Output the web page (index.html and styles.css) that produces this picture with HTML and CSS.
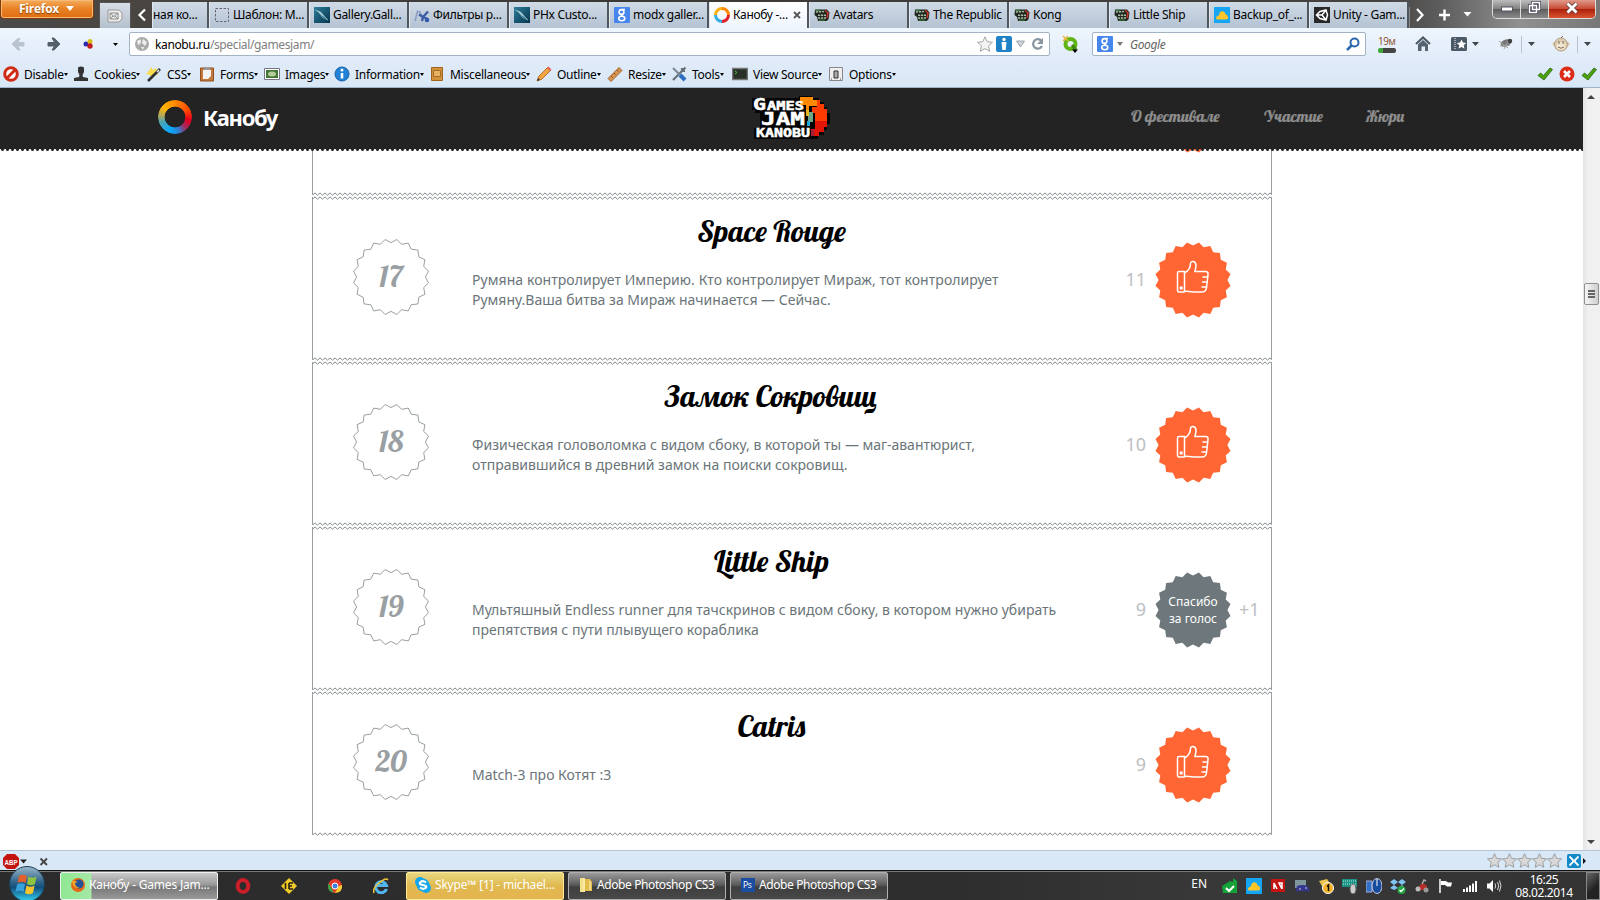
FILE: index.html
```html
<!DOCTYPE html>
<html lang="ru">
<head>
<meta charset="utf-8">
<title>Канобу - Games Jam</title>
<link rel="stylesheet" href="styles.css">
</head>
<body>
<svg class="defs" width="0" height="0">
  <defs>
    <pattern id="wave" width="5" height="4" patternUnits="userSpaceOnUse"><path d="M-.5 3.2 2 .9 4.5 3.2 7 .9" fill="none" stroke="#858c8e" stroke-width="1"/></pattern>
    <pattern id="teeth" width="5" height="3" patternUnits="userSpaceOnUse"><path d="M.7 0H4.3L3.3 2H1.700z" fill="#232323"/></pattern>
    <linearGradient id="orb" x2="0" y2="1"><stop offset="0" stop-color="#9db9cc"/><stop offset=".45" stop-color="#2e6288"/><stop offset=".6" stop-color="#12507e"/><stop offset="1" stop-color="#35d5f5"/></linearGradient>
    <linearGradient id="teal" x2="1" y2="1"><stop offset="0" stop-color="#2c7f9c"/><stop offset="1" stop-color="#06344d"/></linearGradient>
  </defs>
  <symbol id="burst" viewBox="-39 -39 78 78"><path d="M0-34.4 5.9-37.5 10.6-32.7 17.3-33.9 20.2-27.8 26.9-26.9 27.8-20.2 33.9-17.3 32.7-10.6 37.5-5.9 34.4 0 37.5 5.9 32.7 10.6 33.9 17.3 27.8 20.2 26.9 26.9 20.2 27.8 17.3 33.9 10.6 32.7 5.9 37.5 0 34.4-5.9 37.5-10.6 32.7-17.3 33.9-20.2 27.8-26.9 26.9-27.8 20.2-33.9 17.3-32.7 10.6-37.5 5.9-34.4 0-37.5-5.9-32.7-10.6-33.9-17.3-27.8-20.2-26.9-26.9-20.2-27.8-17.3-33.9-10.6-32.7-5.9-37.5z"/></symbol>
  <symbol id="thumb" viewBox="0 0 34 34"><g fill="none" stroke="#fff" stroke-width="1.5" stroke-linejoin="round" stroke-linecap="round"><path d="M1.5 13Q1.5 11.500 3 11.500H8.500V32H3Q1.500 32 1.500 30.500zM8.500 13C13 10.500 14.500 8 14.500 3.500 14.500.5 20 .5 20 5.500 20 8 19.500 9.500 18.800 11.500H30Q32.500 12 32 14.500L30.500 28Q30 31.500 26.500 32H18Q12 31.500 8.500 31"/><path d="M27 17h4.500M26.500 22h4.500M26 27h4"/><circle cx="5.200" cy="28" r="1"/></g></symbol>
  <symbol id="modx" viewBox="0 0 16 16"><path fill="url(#teal)" d="M0 0h16v16H0z"/><path d="M1 3 6 5 14 13M6 5l2 5M8 10l6 3" stroke="#6fa5b5" stroke-width="1" fill="none"/><path d="M2 3 7 5 12 11 7 8z" fill="#a8cad4"/></symbol>
  <symbol id="goog" viewBox="0 0 16 16"><rect width="16" height="16" rx="1" fill="#4787ed"/><g fill="none" stroke="#fff" stroke-width="1.600"><circle cx="7.500" cy="5" r="2.400"/><ellipse cx="7.800" cy="11.500" rx="3" ry="2.200"/><path d="M8 2.500h3M9 7Q6 8 9 9.500"/></g></symbol>
  <symbol id="ring" viewBox="0 0 16 16"><g fill="none" stroke-width="3"><path d="M8 1.500A6.500 6.500 0 0 1 14.500 8" stroke="#f80"/><path d="M14.500 8A6.500 6.500 0 0 1 8 14.500" stroke="#e12029"/><path d="M8 14.500A6.500 6.500 0 0 1 1.500 8" stroke="#37aee5"/><path d="M1.500 8A6.500 6.500 0 0 1 8 1.500" stroke="#fbb016"/></g></symbol>
  <symbol id="jam" viewBox="0 0 16 16"><path d="M1 2.500h12l2.500 3-1 7-2 1.500H4L3 10 .5 8z" fill="#20271f"/><path d="M2 5l8-.5M4 8.200h8M4 11h8" stroke="#a9bba6" stroke-width="1.500" stroke-dasharray="2.200 .8"/><path d="M11 3.500l3 2.500-1 5" stroke="#c8362e" stroke-width="1.500" fill="none"/><path d="M1.500 3.500l5-.5M5 13h6" stroke="#3f8a47"/></symbol>
  <symbol id="cloud" viewBox="0 0 16 16"><path fill="#16a5f3" d="M0 0h16v16H0z"/><path d="M2 11.500c0-2 1.500-3 3-3C5 3 11 3 11.500 7.500c2 0 3 2 2.500 4q-1 1-2 1H4q-2 0-2-1" fill="#ffc629"/></symbol>
  <symbol id="star" viewBox="0 0 16 16"><path d="M8 .8 10.200 5.700 15.500 6.300 11.500 10 12.700 15.300 8 12.600 3.300 15.300 4.500 10 .5 6.300 5.800 5.700z"/></symbol>
  <symbol id="check" viewBox="0 0 16 16"><path d="M1 9.500 3.500 7 6.500 9.500 13 2 15.500 3.500 7 14z" fill="#4ca10c" stroke="#28670a" stroke-width=".8"/></symbol>
</svg>

<header class="tabstrip">
  <div class="fx">Firefox<i class="dn"></i></div>
  <div class="apptab"><svg width="16" height="16" viewBox="0 0 16 16"><path d="M1 2h11l3 3v6l-3 3H1z" fill="#ededed" stroke="#999"/><path d="M3 5h8v6H3zl4 3.500L11 5M3 11l3-3M11 11 8 8" fill="none" stroke="#8a8a8a"/></svg></div>
  <div class="scr"><svg width="10" height="14" viewBox="0 0 10 14"><path d="M8 1.500 2.500 7 8 12.500" fill="none" stroke="#fff" stroke-width="2.200"/></svg></div>
  <div class="tab cut"><span>ная ко...</span></div>
  <div class="tab"><svg class="ic"><rect x="1.500" y="1.500" width="13" height="13" fill="none" stroke="#667" stroke-dasharray="2.500 1.500"/></svg><span>Шаблон: М...</span></div>
  <div class="tab"><svg class="ic"><use href="#modx"/></svg><span>Gallery.Gall...</span></div>
  <div class="tab"><svg class="ic" viewBox="0 0 16 16"><path d="M1 14 3.500 4.500 6 5 9 12" fill="none" stroke="#8b9cc4" stroke-width="1.600"/><path d="M5 7.500 9 10 14 4.500M9 10l-1 4M9 10l4 1.500" fill="none" stroke="#3c5ca5" stroke-width="2.400"/><circle cx="13" cy="13" r="2.300" fill="#3358ac"/></svg><span>Фильтры р...</span></div>
  <div class="tab"><svg class="ic"><use href="#modx"/></svg><span>PHx Custo...</span></div>
  <div class="tab"><svg class="ic"><use href="#goog"/></svg><span>modx galler...</span></div>
  <div class="tab on"><svg class="ic"><use href="#ring"/></svg><span>Канобу -...</span><svg class="x" width="8" height="8"><path d="M1 1 7 7M7 1 1 7" stroke="#555" stroke-width="1.800"/></svg></div>
  <div class="tab"><svg class="ic"><use href="#jam"/></svg><span>Avatars</span></div>
  <div class="tab"><svg class="ic"><use href="#jam"/></svg><span>The Republic</span></div>
  <div class="tab"><svg class="ic"><use href="#jam"/></svg><span>Kong</span></div>
  <div class="tab"><svg class="ic"><use href="#jam"/></svg><span>Little Ship</span></div>
  <div class="tab"><svg class="ic"><use href="#cloud"/></svg><span>Backup_of_...</span></div>
  <div class="tab"><svg class="ic" viewBox="0 0 16 16"><path fill="#292929" d="M0 0h16v16H0z"/><path d="M2.500 8 6 4.500 12 3l1.500 5L12 13 6 11.500zM2.500 8H8l4-5M8 8l4 5" fill="none" stroke="#fff" stroke-width="1.500"/></svg><span>Unity - Gam...</span></div>
  <div class="tabend">
    <svg width="70" height="16" viewBox="0 0 70 16"><path d="M4 2 9.500 8 4 14" fill="none" stroke="#fff" stroke-width="2.200"/><path d="M26 8H37M31.500 2.500v11" stroke="#fff" stroke-width="2.400"/><path d="M50.500 5h8l-4 4.500z" fill="#fff"/></svg>
  </div>
  <div class="winbtns">
    <div><svg width="14" height="12"><rect x="1.500" y="5" width="11" height="4" fill="#fff" stroke="#556"/></svg></div>
    <div><svg width="14" height="14"><path d="M4.500 1.500h7v7h-7zM1.500 4.500h7v7h-7z" fill="none" stroke="#445" stroke-width="3"/><path d="M4.500 1.500h7v7h-7zM1.500 4.500h7v7h-7z" fill="none" stroke="#fff" stroke-width="1.500"/></svg></div>
    <div class="cls"><svg width="14" height="12"><path d="M2.500 1.500 11.500 10.500M11.500 1.500 2.500 10.500" stroke="#644" stroke-width="4.500"/><path d="M2.500 1.500 11.500 10.500M11.500 1.500 2.500 10.500" stroke="#fff" stroke-width="2.800"/></svg></div>
  </div>
</header>

<div class="navbar">
  <div class="navleft">
    <svg width="129" height="30" viewBox="0 0 129 30"><path d="M12 15 18 9.500h2l-2.500 4H24v3.500h-6.500l2.500 4h-2z" fill="#b9c3cd" stroke="#b9c3cd"/><path d="M60 15 54 9h-2l2.500 4.500H48V17h6.500L52 21h2z" fill="#53606c" stroke="#53606c"/><circle cx="86" cy="15" r="2.500" fill="#2929b8"/><circle cx="90" cy="12.500" r="2.500" fill="#d9bd17"/><circle cx="90" cy="17" r="2.700" fill="#c31c20"/><path d="M113 14h5l-2.500 3z"/></svg>
  </div>
  <div class="url">
    <svg width="16" height="16" viewBox="0 0 16 16"><circle cx="8" cy="8" r="7" fill="#aaa"/><path d="M3 5q4-3 4 0t-3 4zM9 3l4 3-2 4-3-3zM7 11l3 0-1 3z" fill="#eee"/></svg>
    <span class="addr"><b>kanobu.ru</b>/special/gamesjam/</span>
    <svg width="70" height="18" viewBox="0 0 70 18"><use href="#star" width="16" height="16" x="1" y="1" fill="#f4f4f4" stroke="#a5a5a5"/><rect x="20" y="1" width="16" height="16" rx="2" fill="#1f82c4"/><circle cx="28" cy="4.500" r="1.700" fill="#fff"/><path d="M25.500 7h5l-.8 8h-3.400z" fill="#fff"/><path d="M40.500 6h8l-4 6z" fill="#ccd3da" stroke="#a0a7b0"/><path d="M65.500 6A4.700 4.700 0 1 0 66 11" fill="none" stroke="#8895a1" stroke-width="2.200"/><path d="M67 3v6h-6z" fill="#8895a1"/></svg>
  </div>
  <svg class="qico" width="18" height="20" viewBox="0 0 18 20"><circle cx="9.500" cy="10" r="5" fill="none" stroke="#62b516" stroke-width="4"/><path d="M11 11l4 5" stroke="#3d8a0c" stroke-width="3"/><path d="M2 2 7 7M2 7 7 2" stroke="#e9b43b" stroke-width="1.500"/><path d="M11 15.500h6L14 19z"/></svg>
  <div class="search"><svg class="ic"><use href="#goog"/></svg><i class="dn g"></i><em>Google</em>
    <svg width="14" height="14"><circle cx="8.500" cy="5.500" r="4" fill="none" stroke="#2b68ad" stroke-width="2"/><path d="M5.500 8.500 1 13" stroke="#2b68ad" stroke-width="2.500"/></svg></div>
  <div class="mem"><span>19м</span><i></i></div>
  <svg class="navicons" width="186" height="30" viewBox="0 0 186 30"><path d="M4 15 11 8.500 18 15" fill="none" stroke="#4c5966" stroke-width="2.200"/><path d="M6 15.500 11 11l5 4.500V22h-3v-4.500H9.500V22H6z" fill="#55626f"/><rect x="39" y="8" width="16" height="14" rx="1.500" fill="#4c5966"/><path d="M43 9v12" stroke="#fff" stroke-dasharray="1 1"/><use href="#star" x="44.500" y="10" width="10" height="10" fill="#fff"/><path d="M60 13h7l-3.500 4z" fill="#3c444c"/><ellipse cx="94" cy="14" rx="5.500" ry="3.500" fill="#777" transform="rotate(-20 94 14)"/><path d="M87 12 96 19M92 20l4-8M88 17l10-1" stroke="#a0a0a0"/><circle cx="98" cy="12" r="2.200" fill="#404040"/><path d="M109.500 7v17M165.500 7v17" stroke="#b5c3d3"/><path d="M116 13h7l-3.500 4zM172 13h7l-3.500 4z" fill="#3c444c"/><circle cx="142.500" cy="15" r="2" fill="#dbc4aa"/><circle cx="155.500" cy="15" r="2" fill="#dbc4aa"/><circle cx="149" cy="15.500" r="6.500" fill="#ddcbae" stroke="#b39e83"/><ellipse cx="149" cy="17" rx="4.500" ry="4" fill="#f1e6d0"/><path d="M147 12v3M151 12v3M146 18q3 2.500 6 0M149 9l2-2" stroke="#796857" fill="none"/></svg>
</div>

<div class="devbar">
  <div class="d d1"><svg class="ic"><circle cx="8" cy="8" r="6.300" fill="#fff" stroke="#cf2b17" stroke-width="3"/><path d="M4 12 12 4" stroke="#cf2b17" stroke-width="3"/></svg><span>Disable</span></div>
  <div class="d d2"><svg class="ic"><path d="M5 1.500Q8-.5 11 1.500V6L9.500 9l.5 2 5 1v3H1v-3l5-1 .5-2L5 6z" fill="#343434"/></svg><span>Cookies</span></div>
  <div class="d d3"><svg class="ic"><path d="M5 1l2 3 4-2-1 4 2 3-4 0-2 4-2-4-4-1 3-3z" fill="#f8dc4d"/><path d="M2 15 14 3" stroke="#303030" stroke-width="2.600"/><path d="M11 6l2-2" stroke="#eee" stroke-width="1.500"/></svg><span>CSS</span></div>
  <div class="d d4"><svg class="ic"><path d="M1.500 2h13v13h-13z" fill="#c37a3c" stroke="#93501f"/><path d="M4 4h8v6l-3 3H4z" fill="#f4f4f4"/><path d="M5 1h6v3H5z" fill="#999"/></svg><span>Forms</span></div>
  <div class="d d5"><svg class="ic"><path d="M.5 2.500h15v11H.5z" fill="#fff" stroke="#778"/><path d="M2 4h12v8H2z" fill="#447836"/><ellipse cx="8" cy="8" rx="4" ry="2.500" fill="#b6cc9a"/></svg><span>Images</span></div>
  <div class="d d6"><svg class="ic"><circle cx="8" cy="8" r="7" fill="#2382d6" stroke="#1560a5"/><path d="M8 7v5.500" stroke="#fff" stroke-width="2.500"/><circle cx="8" cy="4" r="1.500" fill="#fff"/></svg><span>Information</span></div>
  <div class="d d7"><svg class="ic"><path d="M2.500 1.500h11v13h-11z" fill="#d3913c" stroke="#a0641c"/><path d="M4.500 4.500h7v6h-7z" fill="#e7b263" stroke="#a56c26"/></svg><span>Miscellaneous</span></div>
  <div class="d d8"><svg class="ic"><path d="M1 15 3 10 12 1 15 4 6 13z" fill="#f3a546" stroke="#b97327"/><path d="M11 2 14 5 15.500 3.500 12.500.5z" fill="#e1625e"/><path d="M1 15l1-3 2 2z" fill="#333"/></svg><span>Outline</span></div>
  <div class="d d9"><svg class="ic"><path d="M1 12.500 12 1.500 15 4.500 4 15.500z" fill="#d59352" stroke="#a5662d"/><path d="M4 10l1.500 1.500M7 7l1.500 1.500M10 4l1.500 1.500" stroke="#895122"/></svg><span>Resize</span></div>
  <div class="d d10"><svg class="ic"><path d="M2 14 12 4M12 4l2.500-2.500M11 2v3l3 0" stroke="#67717a" stroke-width="2.200" fill="none"/><path d="M2 2l7 7" stroke="#7d8790" stroke-width="2"/><path d="M9 9l5 5" stroke="#2d6cc2" stroke-width="4"/></svg><span>Tools</span></div>
  <div class="d d11"><svg class="ic"><rect x=".5" y="2.500" width="15" height="11" fill="#283028" stroke="#777" stroke-width="1.500"/><path d="M3 5l2 1.500L3 8" stroke="#5cc04e" fill="none"/></svg><span>View Source</span></div>
  <div class="d d12"><svg class="ic"><path d="M1.500 1.500h13v13h-13z" fill="#eee" stroke="#888"/><path d="M6 12V5h4v7z" fill="#aaa" stroke="#333"/><path d="M3 13h1M12 13h1" stroke="#444"/></svg><span>Options</span></div>
  <div class="dright"><svg class="ic"><use href="#check"/></svg><svg class="ic"><circle cx="8" cy="8" r="7.500" fill="#dc2b16"/><path d="M5 5 11 11M11 5 5 11" stroke="#fff" stroke-width="2.700"/></svg><svg class="ic"><use href="#check"/></svg></div>
</div>

<div class="view">
  <main class="page">
    <div class="cards">
      <section class="card">
        <svg class="w"><rect width="100%" height="4" fill="url(#wave)"/></svg>
        <div class="row"><div class="num"></div><div class="txt"></div><div class="cnt"></div><div class="vote"><svg class="b"><use href="#burst"/></svg></div></div>
        <svg class="w bot"><rect width="100%" height="4" fill="url(#wave)"/></svg>
      </section>
      <section class="card">
        <svg class="w"><rect width="100%" height="4" fill="url(#wave)"/></svg>
        <div class="row"><div class="num"><svg class="b"><use href="#burst"/></svg><span>17</span></div>
          <div class="txt"><h2>Space Rouge</h2><p><span class="wide">Румяна контролирует Империю. Кто контролирует Мираж, тот контролирует</span><br>Румяну.Ваша битва за Мираж начинается — Сейчас.</p></div>
          <div class="cnt">11</div><div class="vote"><svg class="b"><use href="#burst"/></svg><svg class="th"><use href="#thumb"/></svg></div></div>
        <svg class="w bot"><rect width="100%" height="4" fill="url(#wave)"/></svg>
      </section>
      <section class="card">
        <svg class="w"><rect width="100%" height="4" fill="url(#wave)"/></svg>
        <div class="row"><div class="num"><svg class="b"><use href="#burst"/></svg><span>18</span></div>
          <div class="txt"><h2>Замок Сокровищ</h2><p>Физическая головоломка с видом сбоку, в которой ты — маг-авантюрист,<br>отправившийся в древний замок на поиски сокровищ.</p></div>
          <div class="cnt">10</div><div class="vote"><svg class="b"><use href="#burst"/></svg><svg class="th"><use href="#thumb"/></svg></div></div>
        <svg class="w bot"><rect width="100%" height="4" fill="url(#wave)"/></svg>
      </section>
      <section class="card">
        <svg class="w"><rect width="100%" height="4" fill="url(#wave)"/></svg>
        <div class="row"><div class="num"><svg class="b"><use href="#burst"/></svg><span>19</span></div>
          <div class="txt"><h2>Little Ship</h2><p>Мультяшный Endless runner для тачскринов с видом сбоку, в котором нужно убирать<br>препятствия с пути плывущего кораблика</p></div>
          <div class="cnt">9</div><div class="vote done"><svg class="b"><use href="#burst"/></svg><span>Спасибо<br>за голос</span></div><div class="plus">+1</div></div>
        <svg class="w bot"><rect width="100%" height="4" fill="url(#wave)"/></svg>
      </section>
      <section class="card last">
        <svg class="w"><rect width="100%" height="4" fill="url(#wave)"/></svg>
        <div class="row"><div class="num"><svg class="b"><use href="#burst"/></svg><span>20</span></div>
          <div class="txt"><h2>Catris</h2><p>Match-3 про Котят :3</p></div>
          <div class="cnt">9</div><div class="vote"><svg class="b"><use href="#burst"/></svg><svg class="th"><use href="#thumb"/></svg></div></div>
        <svg class="w bot"><rect width="100%" height="4" fill="url(#wave)"/></svg>
      </section>
    </div>
    <div class="sitehead">
      <div class="bar">
        <div class="brand"><i class="logo"></i><span>Канобу</span></div>
        <svg class="gj" width="80" height="46" viewBox="0 0 80 46">
          <path d="M47 1H60V3H67V7H72V12H75V18H78V29H75V35H72V40H66V44H2V33H8V18H3V15H0V3H47z" fill="#050505"/>
          <path d="M48 2h13v3h4v6h-8v4h-3v-5H48z" fill="#ff8a00"/>
          <path d="M65 5h3v4h4v5h3v12H63v-8h-3v-6h5z" fill="#ff3c00"/>
          <path d="M63 26h12v6h-3v5h-5v4h-8v-7h4z" fill="#e01507"/>
          <path d="M54 15h3v6h-3z" fill="#e5b420"/><path d="M57 17h4v10h-3v4h-2V21h1z" fill="#6fa789"/><path d="M55 26h3v5h-3z" fill="#1fa9e1"/><path d="M59 35h3v6h-3z" fill="#a31f38"/>
          <g fill="#fff" stroke="#fff" stroke-width=".5" font-family="DejaVu Sans Mono,monospace" font-weight="700">
            <text x="1" y="14.500" font-size="16" textLength="13" lengthAdjust="spacingAndGlyphs">G</text><text x="15" y="14.500" font-size="12.500" textLength="37" lengthAdjust="spacingAndGlyphs">AMES</text>
            <text x="9" y="29.500" font-size="18" textLength="44" lengthAdjust="spacingAndGlyphs">JAM</text>
            <text x="4" y="42" font-size="12" textLength="54" lengthAdjust="spacingAndGlyphs">KANOBU</text>
          </g>
        </svg>
        <nav class="menu"><a class="m1">О фестивале</a><a class="m2">Участие</a><a class="m3">Жюри</a></nav>
      </div>
      <svg class="teeth"><rect width="100%" height="3" fill="url(#teeth)"/></svg>
    </div>
  </main>
  <aside class="sb">
    <svg width="16" height="18"><path d="M4 11h8L8 7z" fill="#444"/></svg>
    <div class="knob"><i></i><i></i><i></i></div>
    <svg class="down" width="16" height="18"><path d="M4 8h8l-4 4z" fill="#444"/></svg>
  </aside>
</div>

<div class="addon">
  <svg width="60" height="18" viewBox="0 0 60 18"><path d="M7 2h8l4 4v7l-4 4H7l-4-4V6z" fill="#c41410"/><text x="4.500" y="13" font-size="8" font-weight="700" fill="#fff" font-family="Liberation Sans,sans-serif" textLength="13" lengthAdjust="spacingAndGlyphs">ABP</text><path d="M20 7.500h7l-3.500 4z" fill="#222"/><path d="M40.500 6.500 47 13M47 6.500 40.500 13" stroke="#444" stroke-width="1.800"/></svg>
  <svg width="106" height="18" viewBox="0 0 106 18"><g fill="#d8d8d8" stroke="#9b9b9b" stroke-width="1"><use href="#star" x="0" y="1" width="15" height="15"/><use href="#star" x="15" y="1" width="15" height="15"/><use href="#star" x="30" y="1" width="15" height="15"/><use href="#star" x="45" y="1" width="15" height="15"/><use href="#star" x="60" y="1" width="15" height="15"/></g><rect x="80" y="2" width="14" height="14" rx="2" fill="#128ac8"/><path d="M82.500 4.500 86 8v2l-3.500 3.500M91.500 4.500 88 8v2l3.500 3.500M86 9h2" fill="none" stroke="#fff" stroke-width="1.800"/><path d="M96 6l3 3-3 3z" fill="#111"/></svg>
</div>

<footer class="task">
  <svg class="start" width="40" height="36" viewBox="0 0 40 36"><circle cx="20" cy="19" r="17.500" fill="url(#orb)" stroke="#1c4058"/><path d="M12 11q4-2.500 8 0l-1.500 7q-4-2.500-8 0z" fill="#e2602c"/><path d="M21.500 11.500q4 2.500 8 0L28 19q-4 2.500-8 0z" fill="#8fc440"/><path d="M10 19.500q4-2.500 8 0L16.500 27q-4-2.500-8 0z" fill="#38a2dd"/><path d="M19.500 20.500q4 2.500 8 0L26 28q-4 2.500-8 0z" fill="#f6c52c"/></svg>
  <div class="tb ff"><svg class="ic"><circle cx="8" cy="8" r="7" fill="#e66a16"/><circle cx="9" cy="7" r="4.500" fill="#23529a"/><path d="M2 4q1 8 8 7-5-1-5-5l3-1-4-1z" fill="#f7a928"/></svg><span>Канобу - Games Jam...</span></div>
  <div class="pins">
    <svg class="ic"><ellipse cx="8" cy="8" rx="5.300" ry="6" fill="none" stroke="#cc1e29" stroke-width="4"/></svg>
    <svg class="ic"><path d="M8 0 16 8 8 16 0 8z" fill="#f3cb26"/><path d="M4.500 5v6M8 5h4M8 8h3M8 11h4M8 5v6" stroke="#25201a" stroke-width="1.600"/></svg>
    <svg class="ic"><circle cx="8" cy="8" r="7" fill="#e53b2e"/><path d="M1.500 5 7 14.500Q1 14 1 8z" fill="#37a54a"/><path d="M8 15 12 8l3-1q1 7-7 8" fill="#f9cf2e"/><circle cx="8" cy="8" r="3" fill="#3d7fe0" stroke="#fff"/></svg>
    <svg class="ic"><path d="M13.500 11A5.500 5.500 0 1 1 13.500 7.500H4" fill="none" stroke="#52b7f0" stroke-width="3"/><path d="M1 15Q-1 11 6 5T15 2" fill="none" stroke="#efc43b" stroke-width="1.600"/></svg>
  </div>
  <div class="tb sk"><svg class="ic"><circle cx="5" cy="5" r="5" fill="#16a6ea"/><circle cx="11" cy="11" r="5" fill="#16a6ea"/><circle cx="8" cy="8" r="6.500" fill="#16a6ea"/><path d="M11 5.500Q8 3 5.500 5T8 8t2.500 3T5 10.500" fill="none" stroke="#fff" stroke-width="2"/></svg><span>Skype™ [1] - michael...</span></div>
  <div class="tb a1"><svg class="ic"><path d="M2 1h5v14H2z" fill="#f4e08a"/><path d="M7 2h5l2 3v9H7z" fill="#e3bd4c"/><path d="M6 1v14M12 4v9" stroke="#fff4c0"/></svg><span>Adobe Photoshop CS3</span></div>
  <div class="tb a2"><svg class="ic"><path d="M1 1h14v14H1z" fill="#1b4da0"/><text x="3" y="10.500" font-size="8.500" fill="#fff" font-family="Open Sans,sans-serif">Ps</text></svg><span>Adobe Photoshop CS3</span></div>
  <div class="tray">
    <span class="en">EN</span>
    <div class="ti">
      <svg class="ic"><path d="M0 8 8 3l3 1V0l4 3v12H1z" fill="#15a339"/><path d="M4 10l3 3 5-5" fill="none" stroke="#fff" stroke-width="2"/></svg>
      <svg class="ic"><use href="#cloud"/></svg>
      <svg class="ic"><path d="M1 1h14v13H1z" fill="#c41313"/><path d="M4 11V5l3 6M12 11V5l-3 0 3 6" fill="none" stroke="#fff" stroke-width="1.500"/></svg>
      <svg class="ic"><path d="M1 2h11v8H1z" fill="#7f979d"/><path d="M3 8q5-2 11 0l2 6-4-1H5l-3 1z" fill="#34368f"/><path d="M6 10v2M11 10h2" stroke="#ccc"/></svg>
      <svg class="ic"><path d="M1 3l8-2 4 6-6 6z" fill="#ecc44f"/><circle cx="10" cy="10" r="5.500" fill="#f4b229" stroke="#fff"/><path d="M9 8.500 10.500 7v6" fill="none" stroke="#111" stroke-width="1.500"/></svg>
      <svg class="ic"><path d="M0 1h15v8H0z" fill="#1b9185"/><path d="M1 3h13M1 6h13" stroke="#b8f0e5" stroke-dasharray="1 1"/><ellipse cx="11" cy="11" rx="3" ry="5" fill="#ccc" stroke="#666"/></svg>
      <svg class="ic"><path d="M0 3h6v11H0z" fill="#3171c4" stroke="#aad"/><ellipse cx="11" cy="8" rx="5" ry="7.500" fill="#164c9e" stroke="#ccd"/><path d="M11 1v7" stroke="#fff"/></svg>
      <svg class="ic"><path d="M4 1 8 4 4 7 0 4zM12 1l4 3-4 3-4-3zM4 7l4 3-4 2-4-2zM12 7l3 3-3 2-4-2z" fill="#82c4f0"/><circle cx="11.500" cy="12" r="4" fill="#22a442"/><path d="M9.500 12l1.500 1.500L14 10.500" fill="none" stroke="#fff" stroke-width="1.300"/></svg>
      <svg class="ic"><path d="M5 8 9 5l4 3-1 4H6z" fill="#b62f29"/><circle cx="4" cy="11" r="2.500" fill="#bbb"/><circle cx="12" cy="12" r="2.500" fill="#999"/><path d="M8 6l2-4 2 1" stroke="#aaa" fill="none" stroke-width="1.500"/></svg>
      <svg class="ic"><path d="M2 1v14" stroke="#fff" stroke-width="1.500"/><path d="M3 3h5l2 1.500h4l-1 4H9L7 7H3z" fill="#fff"/></svg>
      <svg class="ic"><path d="M2 11v3M5 9.500V14M8 7.500V14M11 5.500V14M14 3v11" stroke="#fff" stroke-width="2"/></svg>
      <svg class="ic"><path d="M1 5.500h2.500L7 2v12L3.500 10.500H1z" fill="#fff"/><path d="M9 5.500q1.500 2.500 0 5M11.500 4q2.500 4 0 8M13.500 2.500q3 5 0 11" fill="none" stroke="#ddd"/></svg>
    </div>
    <div class="clock">16:25<br>08.02.2014</div>
    <i class="peek"></i>
  </div>
</footer>
</body>
</html>
```
FILE: styles.css
```css
* { box-sizing: border-box; }
body { margin: 0; width: 1600px; height: 900px; overflow: hidden; background: #fff; font: 12px "Noto Sans", "Open Sans", sans-serif; color: #000; display: flex; flex-direction: column; }
svg { display: block; flex: none; }
.defs { position: absolute; }
.ic { width: 16px; height: 16px; }
span { white-space: nowrap; }
.dn { border: 4px solid transparent; border-top: 5px solid #fff; border-bottom: 0; }

.tabstrip { height: 28px; flex: none; display: flex; align-items: flex-end; background: linear-gradient(90deg, #4a4a4a 0, #4a4642 100px, #3a3835 600px, #454240 1380px, #5d5d5d 1440px, #909090 1520px, #777 1600px); }
.tabstrip > * { flex: none; }
.fx { width: 94px; height: 19px; align-self: flex-start; margin-right: 5px; background: linear-gradient(#f4ad5a, #e88024 50%, #dd6d10); border: 1px solid #7e3c0a; border-top: 0; border-radius: 0 0 4px 4px; box-shadow: inset 0 0 0 1px #f6b978; color: #fff; font: 700 12px/17px "Open Sans", sans-serif; letter-spacing: -.25px; display: flex; align-items: center; gap: 7px; padding: 0 0 2px 18px; text-shadow: 0 1px 1px #864000; }
.apptab { width: 32px; height: 26px; background: linear-gradient(#d6dde6, #b4c0ce); border: 1px solid #555; border-bottom: 0; display: grid; place-items: center; }
.scr { width: 21px; height: 26px; display: grid; place-items: center; }
.tab { width: 100px; height: 26px; border: 1px solid #50565d; border-left-color: #e2e8ee; border-width: 0 2px 0 1px; background: linear-gradient(#d0dbe7, #b4c2d2); display: flex; align-items: center; gap: 3px; padding: 0 0 1px 4px; overflow: hidden; letter-spacing: -.3px; }
.tab.cut { width: 57px; padding-left: 0; }
.tab.on { background: linear-gradient(#fff, #eef5fd); }
.tab .x { margin-left: auto; margin-right: 6px; }
.tabend { width: 75px; padding: 0 0 5px 3px; border-left: 1px solid #888; }
.winbtns { align-self: flex-start; display: flex; height: 19px; width: 104px; margin-left: 8px; border: 1px solid #ddd; border-top: 0; border-radius: 0 0 5px 5px; overflow: hidden; }
.winbtns div { width: 28px; padding-bottom: 2px; background: linear-gradient(#bdbdbd, #828282 48%, #5c5c5c 50%, #8a8a8a); border-right: 1px solid #ddd; display: grid; place-items: center; }
.winbtns .cls { width: 46px; background: linear-gradient(#e09a8c, #c84b34 48%, #ab1f0a 50%, #d9542f); border: 0; }

.navbar { height: 33px; flex: none; background: linear-gradient(#eef5fd, #e0ebf8); display: flex; align-items: center; padding-bottom: 1px; }
.navleft { width: 129px; }
.url { width: 921px; height: 24px; background: #fff; border: 1px solid #a3b3c6; border-radius: 2px; display: flex; align-items: center; padding: 0 3px 0 4px; gap: 5px; }
.addr { flex: 1; color: #808080; letter-spacing: -.37px; }
.addr b { font-weight: 400; color: #000; }
.qico { margin: 0 13px 0 11px; }
.search { width: 274px; height: 24px; background: #fff; border: 1px solid #a3b3c6; border-radius: 2px; display: flex; align-items: center; padding: 0 5px 0 4px; }
.search .dn { border-width: 3px; border-top: 4px solid #777; border-bottom: 0; margin: 0 7px 0 4px; }
.search em { flex: 1; color: #666; letter-spacing: -.4px; }
.mem { width: 19px; margin-left: 12px; color: #8a4a1f; font: 10px/13px "Open Sans", sans-serif; letter-spacing: -.5px; }
.mem i { display: block; height: 5px; width: 18px; border-radius: 2px; background: linear-gradient(90deg, #41a33c 5px, #444 5px); }
.navicons { margin-left: 15px; }

.devbar { height: 27px; flex: none; background: linear-gradient(#e0ebf8, #d8e7f6); border-bottom: 1px solid #9fb3ca; display: flex; align-items: center; padding-left: 3px; letter-spacing: -.27px; }
.d { display: flex; align-items: center; gap: 5px; }
.d span::after { content: ""; display: inline-block; border: 2px solid transparent; border-top: 3px solid #000; border-bottom: 0; vertical-align: 3px; }
.d1 { width: 70px; } .d2 { width: 73px; } .d3 { width: 53px; } .d4 { width: 65px; } .d5 { width: 70px; } .d6 { width: 95px; }
.d7 { width: 107px; } .d8 { width: 71px; } .d9 { width: 64px; } .d10 { width: 61px; } .d11 { width: 96px; } .d12 { width: 80px; }
.dright { margin-left: auto; margin-right: 3px; display: flex; gap: 6px; }

.view { height: 762px; flex: none; display: flex; }
.page { width: 1583px; position: relative; overflow: hidden; }
.cards { width: 960px; margin: -56px 0 0 312px; display: flex; flex-direction: column; gap: 2px; }
.card { height: 163px; flex: none; border: solid #999fa1; border-width: 0 1px; display: flex; flex-direction: column; }
.card.last { height: 143px; }
.w { width: 100%; height: 4px; margin: -1px 0 1px; }
.w.bot { margin: 1px 0 -1px; }
.row { flex: 1; min-height: 0; display: grid; grid-template-columns: 119px 600px 74px 76px 1fr; padding-left: 40px; }
.num, .vote { align-self: center; width: 76px; height: 76px; display: grid; place-items: center; }
.num > *, .vote > * { grid-area: 1 / 1; }
.num { margin: -5px 0 0 -1px; }
.vote { margin-left: 8px; color: #fff; }
.b { width: 78px; height: 78px; fill: #f63; overflow: visible; }
.num .b { fill: #fff; stroke: #8d9496; stroke-width: .9; }
.done .b { fill: #6e777b; }
.num span { font: 30px/36px Lobster, "Liberation Serif", serif; color: #999fa3; margin-top: -2px; }
.th { width: 34px; height: 34px; margin-top: -5px; }
.done span { font-size: 12px; line-height: 17px; text-align: center; }
h2 { margin: 10px 0 0 -1px; font: 30px/40px Lobster, "Liberation Serif", serif; text-align: center; white-space: nowrap; }
p { margin: 19px 0 0; font-size: 14px; line-height: 20px; color: #6b7579; white-space: nowrap; }
.wide { letter-spacing: .07px; }
.cnt, .plus { align-self: center; font-size: 18px; color: #bcc0c3; line-height: 20px; margin-top: 1px; }
.cnt { text-align: right; }
.plus { margin-left: 17px; }

.sitehead { position: absolute; left: 0; top: 0; width: 1583px; }
.bar { height: 61px; background: #232323; display: flex; align-items: center; padding-left: 158px; }
.brand { display: flex; align-items: center; gap: 11px; color: #fff; font: 700 22px "Noto Sans", sans-serif; letter-spacing: -1.3px; width: 594px; margin-top: -3px; }
.brand span { margin-top: -1px; }
.logo { width: 34px; height: 34px; border-radius: 50%; background: conic-gradient(#ff8a00, #ff4a00 60deg, #e8001c 100deg, #a3295c 135deg, #2d7fd0 165deg, #0aa8ff 200deg, #4ba5b0 250deg, #b0a860 275deg, #ffb400 310deg, #ff8a00); -webkit-mask: radial-gradient(circle, transparent 10px, #000 10.700px); mask: radial-gradient(circle, transparent 10px, #000 10.700px); }
.gj { margin-top: -2px; }
.menu { margin-left: 299px; display: flex; margin-top: -5px; font: 16px Lobster, "Liberation Serif", serif; color: #8d8d8d; -webkit-text-stroke: .2px #8d8d8d; }
.menu a { white-space: nowrap; }
.m1 { width: 133px; } .m2 { width: 102px; }
.teeth { width: 100%; height: 3px; }

.sb { width: 17px; background: linear-gradient(90deg, #e3e3e3, #f0f0f0 30%, #f0f0f0); display: flex; flex-direction: column; }
.knob { margin: 177px 1px 0; height: 22px; border: 1px solid #8f8f8f; border-radius: 2px; background: linear-gradient(90deg, #f5f5f5, #d0d0d2); display: flex; flex-direction: column; gap: 1px; align-items: center; justify-content: center; }
.knob i { width: 7px; height: 2px; background: #666; }
.down { margin-top: auto; }

.addon { height: 20px; flex: none; background: #d9e8f7; border-top: 1px solid #b4c4d4; display: flex; justify-content: space-between; padding: 1px 8px 0 0; }
.addon svg:last-child { margin-right: -1px; }
.task { height: 30px; flex: none; background: linear-gradient(90deg, #2b2b2b, #2e2e2e 60%, #383838 75%, #333); border-top: 1px solid #111; box-shadow: inset 0 1px #777; display: flex; align-items: center; color: #fff; }
.start { margin: -6px 13px 0 7px; position: relative; }
.tb { width: 158px; height: 28px; border: 1px solid #b0b0b0; border-radius: 2px; display: flex; align-items: center; gap: 6px; padding: 0 0 2px 9px; background: linear-gradient(#9a9a9a, #5c5c5c 45%, #3f3f3f 55%, #484848); letter-spacing: -.2px; }
.ff { background: linear-gradient(90deg, #8fe892 0, #a5e8a5 30px, transparent 31px), linear-gradient(#c9c9c9, #999 45%, #777 55%, #999); border-color: #eee; gap: 3px; }
.sk { background: linear-gradient(#e9d780, #e0b94f 50%, #e7b450); border-color: #ffeb95; gap: 4px; padding-left: 8px; }
.pins { display: flex; gap: 30px; margin: 0 17px; }
.a1, .a2 { margin-left: 4px; gap: 3px; letter-spacing: -.4px; }
.tray { margin-left: auto; display: flex; align-items: center; height: 100%; }
.en { margin: -4px 15px 0 0; font-size: 12px; }
.ti { display: flex; gap: 8px; }
.clock { width: 84px; text-align: center; line-height: 13px; font-size: 12px; letter-spacing: -.4px; }
.peek { width: 14px; height: 28px; border: 1px solid #888; background: linear-gradient(135deg, #666, #222 60%); }
```
